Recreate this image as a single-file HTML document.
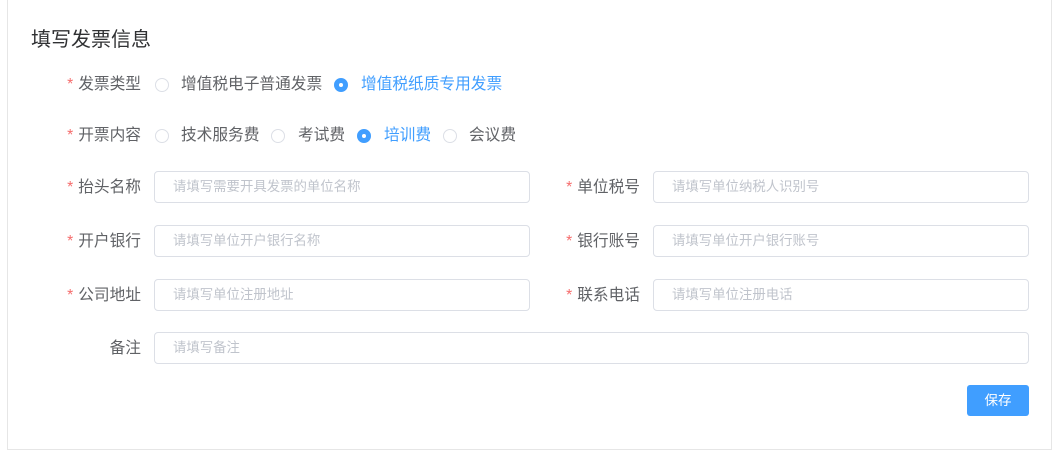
<!DOCTYPE html>
<html><head><meta charset="utf-8"><style>
*{margin:0;padding:0;box-sizing:border-box}
body{width:1059px;height:463px;background:#fff;font-family:"Liberation Sans","Noto Sans CJK SC",sans-serif;position:relative;overflow:hidden;color:#606266}
.card{position:absolute;left:7px;top:-2px;width:1045px;height:452px;border:1px solid #e6e6e6;background:#fff}
.a{position:absolute;white-space:nowrap}
.title{left:31px;top:23px;font-size:20px;color:#303133}
.lbl{font-size:15.7px;color:#606266;text-align:right;width:120px;line-height:20px}
.lbl i{color:#f56c6c;font-style:normal;margin-right:5px}
.r{width:14px;height:14px;border:1px solid #dcdfe6;border-radius:50%;background:#fff}
.r.on{border-color:#409eff;background:#409eff}
.r.on:after{content:"";position:absolute;left:4px;top:4px;width:4px;height:4px;border-radius:50%;background:#fff}
.t{font-size:15.7px;line-height:20px;color:#606266}
.t.on{color:#409eff}
.in{height:32px;border:1px solid #dcdfe6;border-radius:4px;font-size:13.4px;color:#c0c4cc;line-height:30px;padding-left:18px}
.btn{left:967px;top:385px;width:62px;height:31px;background:#409eff;border-radius:3px;color:#fff;font-size:13.5px;text-align:center;line-height:31px}
</style></head><body>
<div class="card"></div>
<div class="a title">填写发票信息</div>

<div class="a lbl" style="left:21px;top:75px"><i>*</i>发票类型</div>
<div class="a r" style="left:155px;top:78px"></div><div class="a t" style="left:181px;top:75px">增值税电子普通发票</div>
<div class="a r on" style="left:334px;top:78px"></div><div class="a t on" style="left:361px;top:75px">增值税纸质专用发票</div>

<div class="a lbl" style="left:21px;top:126px"><i>*</i>开票内容</div>
<div class="a r" style="left:155px;top:129px"></div><div class="a t" style="left:181px;top:126px">技术服务费</div>
<div class="a r" style="left:271px;top:129px"></div><div class="a t" style="left:298px;top:126px">考试费</div>
<div class="a r on" style="left:357px;top:129px"></div><div class="a t on" style="left:384px;top:126px">培训费</div>
<div class="a r" style="left:443px;top:129px"></div><div class="a t" style="left:469px;top:126px">会议费</div>

<div class="a lbl" style="left:21px;top:178px"><i>*</i>抬头名称</div>
<div class="a in" style="left:154px;top:171px;width:376px">请填写需要开具发票的单位名称</div>
<div class="a lbl" style="left:520px;top:178px"><i>*</i>单位税号</div>
<div class="a in" style="left:653px;top:171px;width:376px">请填写单位纳税人识别号</div>

<div class="a lbl" style="left:21px;top:232px"><i>*</i>开户银行</div>
<div class="a in" style="left:154px;top:225px;width:376px">请填写单位开户银行名称</div>
<div class="a lbl" style="left:520px;top:232px"><i>*</i>银行账号</div>
<div class="a in" style="left:653px;top:225px;width:376px">请填写单位开户银行账号</div>

<div class="a lbl" style="left:21px;top:286px"><i>*</i>公司地址</div>
<div class="a in" style="left:154px;top:279px;width:376px">请填写单位注册地址</div>
<div class="a lbl" style="left:520px;top:286px"><i>*</i>联系电话</div>
<div class="a in" style="left:653px;top:279px;width:376px">请填写单位注册电话</div>

<div class="a lbl" style="left:21px;top:339px">备注</div>
<div class="a in" style="left:154px;top:332px;width:875px">请填写备注</div>

<div class="a btn">保存</div>
</body></html>
